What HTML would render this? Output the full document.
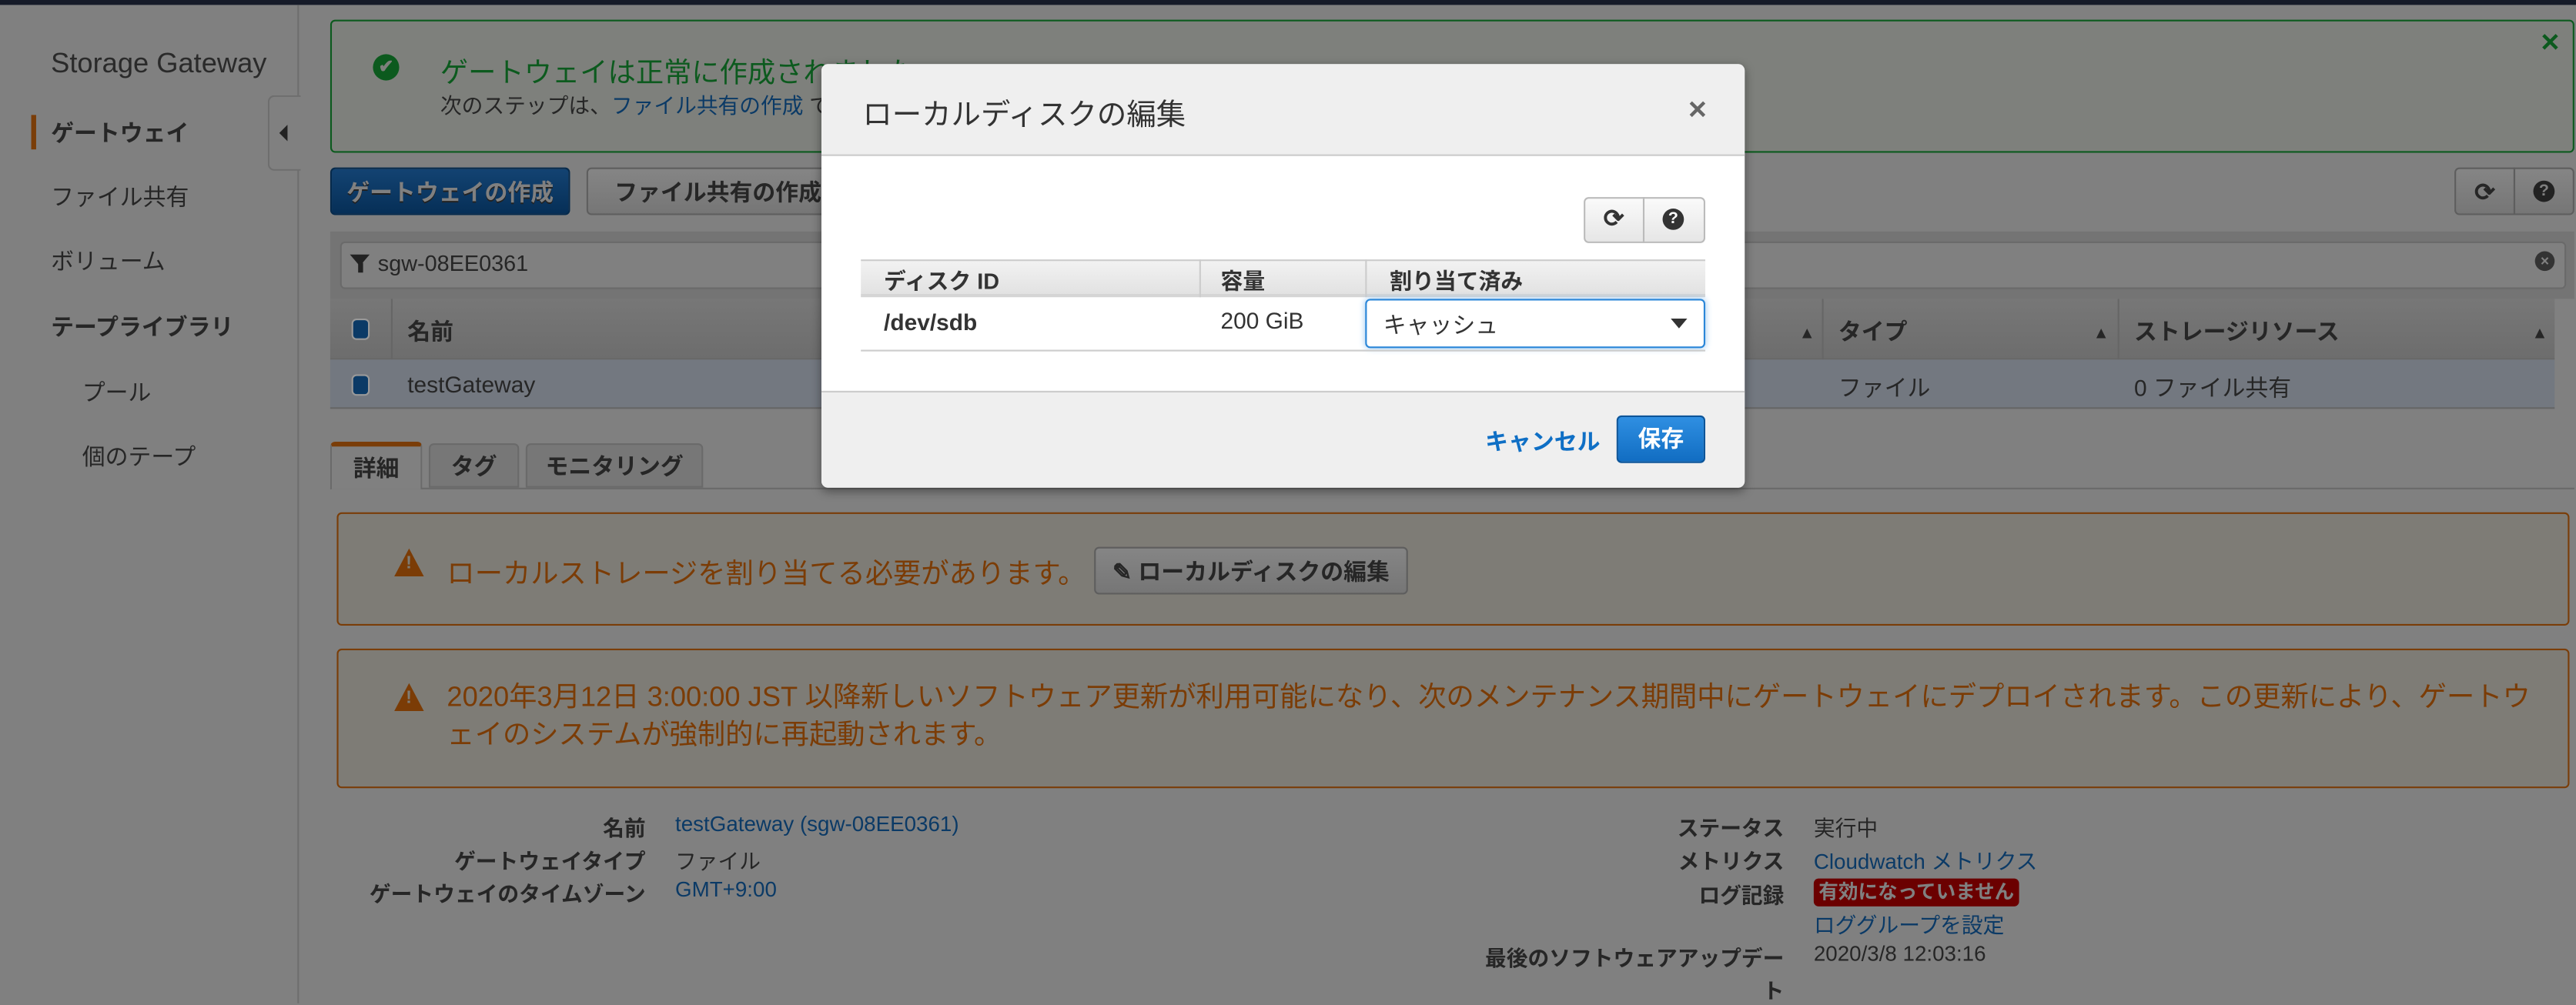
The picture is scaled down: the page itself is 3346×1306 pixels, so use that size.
<!DOCTYPE html>
<html><head><meta charset="utf-8">
<style>
*{box-sizing:border-box;margin:0;padding:0}
html,body{width:3346px;height:1304px;overflow:hidden;background:#808080}
#w{position:absolute;left:0;top:0;width:1568px;height:611px;transform:scale(2.13393);transform-origin:0 0;background:#808080;font-family:"Liberation Sans","Noto Sans CJK JP",sans-serif;color:#262626;font-size:13px}
.a{position:absolute;white-space:nowrap}
.b{font-weight:bold}
.lk{color:#0b3a66}
.btn{position:absolute;border:1px solid #5e5e5e;border-radius:3px;background:linear-gradient(#858585,#767676);font-weight:bold;font-size:14px;display:flex;align-items:center;justify-content:center}
.warn{position:absolute;left:205px;width:1359px;border:1px solid #7a3d08;border-radius:3px;background:#7e7c76;color:#7b3c06;font-size:17px}
.tri{position:absolute;width:0;height:0;border-left:9px solid transparent;border-right:9px solid transparent;border-bottom:17px solid #7b3c06}
.tri:after{content:"!";position:absolute;left:-2px;top:3px;font-size:11px;font-weight:bold;color:#7e7c76;line-height:12px}
.lbl{position:absolute;text-align:right;font-weight:bold;white-space:nowrap}
</style></head><body><div id="w">
<div class="a" style="left:0;top:0;width:1568px;height:3px;background:#161b29"></div>
<!-- sidebar -->
<div class="a" style="left:181px;top:3px;width:1px;height:608px;background:#6e6e6e"></div>
<div class="a" style="left:31px;top:29px;font-size:17px;color:#2a2a2a">Storage Gateway</div>
<div class="a" style="left:19px;top:70px;width:3px;height:21px;background:#7a3d08"></div>
<div class="a b" style="left:31px;top:71px;font-size:14px">ゲートウェイ</div>
<div class="a" style="left:31px;top:110px;font-size:14px">ファイル共有</div>
<div class="a" style="left:31px;top:149px;font-size:14px">ボリューム</div>
<div class="a b" style="left:31px;top:189px;font-size:14px">テープライブラリ</div>
<div class="a" style="left:50px;top:229px;font-size:14px">プール</div>
<div class="a" style="left:50px;top:268px;font-size:14px">個のテープ</div>
<div class="a" style="left:163px;top:58px;width:20px;height:46px;border:1px solid #6e6e6e;border-right:none;border-radius:4px 0 0 4px;background:#808080"></div>
<div class="a" style="left:170px;top:76px;width:0;height:0;border-top:5px solid transparent;border-bottom:5px solid transparent;border-right:5px solid #222"></div>
<!-- success alert -->
<div class="a" style="left:201px;top:12px;width:1366px;height:81px;border:1px solid #0c5a1e;border-radius:3px;background:#7e807c"></div>
<div class="a" style="left:227px;top:33px;width:16px;height:16px;border-radius:50%;background:#0c5a1e;color:#7e807c;font-size:11px;font-weight:bold;text-align:center;line-height:16px">✔</div>
<div class="a" style="left:268px;top:30px;font-size:17px;color:#0c5a1e">ゲートウェイは正常に作成されました</div>
<div class="a" style="left:268px;top:54px;font-size:13px">次のステップは、<span class="lk">ファイル共有の作成</span> で</div>
<div class="a b" style="left:1546px;top:17px;color:#0c5a1e;font-size:15px">✕</div>
<!-- buttons -->
<div class="btn" style="left:201px;top:102px;width:146px;height:29px;background:linear-gradient(#134372,#062f57);border-color:#062a4c;color:#808080;text-shadow:0 1px 0 #222">ゲートウェイの作成</div>
<div class="btn" style="left:357px;top:102px;width:160px;height:29px">ファイル共有の作成</div>
<div class="btn" style="left:1494px;top:102px;width:37px;height:29px;border-radius:3px 0 0 3px;font-size:15px">⟳</div>
<div class="btn" style="left:1530px;top:102px;width:37px;height:29px;border-radius:0 3px 3px 0"><span style="display:inline-block;width:13px;height:13px;border-radius:50%;background:#222;color:#808080;font-size:10px;text-align:center;line-height:13px">?</span></div>
<!-- filter -->
<div class="a" style="left:201px;top:141px;width:1366px;height:41px;background:#747474"></div>
<div class="a" style="left:207px;top:147px;width:1355px;height:29px;background:#808080;border:1px solid #6a6a6a;border-radius:3px"></div>
<div class="a" style="left:213px;top:155px;width:0;height:0;border-left:6px solid transparent;border-right:6px solid transparent;border-top:7px solid #222"></div>
<div class="a" style="left:218px;top:160px;width:3px;height:6px;background:#222"></div>
<div class="a" style="left:230px;top:153px;font-size:13.5px">sgw-08EE0361</div>
<div class="a" style="left:1543px;top:153px;width:12px;height:12px;border-radius:50%;background:#333;color:#808080;font-size:9px;text-align:center;line-height:12px;font-weight:bold">×</div>
<!-- table -->
<div class="a" style="left:201px;top:182px;width:1354px;height:37px;background:linear-gradient(#777,#6d6d6d);border-bottom:1px solid #666"></div>
<div class="a" style="left:238px;top:182px;width:1px;height:37px;background:#666"></div>
<div class="a" style="left:1109px;top:182px;width:1px;height:37px;background:#666"></div>
<div class="a" style="left:1289px;top:182px;width:1px;height:37px;background:#666"></div>
<div class="a" style="left:214px;top:194px;width:11px;height:13px;border:1px solid #999;border-radius:3px;background:#0b3a66"></div>
<div class="a b" style="left:248px;top:192px;font-size:14px">名前</div>
<div class="a b" style="left:1119px;top:192px;font-size:14px">タイプ</div>
<div class="a b" style="left:1299px;top:192px;font-size:14px">ストレージリソース</div>
<div class="a" style="left:1095px;top:198px;font-size:10px">▲</div>
<div class="a" style="left:1274px;top:198px;font-size:10px">▲</div>
<div class="a" style="left:1541px;top:198px;font-size:10px">▲</div>
<div class="a" style="left:201px;top:219px;width:1354px;height:30px;background:#737880;border-bottom:1px solid #666"></div>
<div class="a" style="left:214px;top:228px;width:11px;height:13px;border:1px solid #999;border-radius:3px;background:#0b3a66"></div>
<div class="a" style="left:248px;top:226px;font-size:14px">testGateway</div>
<div class="a" style="left:1119px;top:226px;font-size:14px">ファイル</div>
<div class="a" style="left:1299px;top:226px;font-size:14px">0 ファイル共有</div>
<!-- tabs -->
<div class="a" style="left:201px;top:297px;width:1366px;height:1px;background:#6a6a6a"></div>
<div class="a b" style="left:201px;top:269px;width:56px;height:29px;background:#808080;border:1px solid #6a6a6a;border-bottom:none;border-top:3px solid #7a3d08;border-radius:3px 3px 0 0;text-align:center;line-height:26px;font-size:14px">詳細</div>
<div class="a b" style="left:261px;top:270px;width:55px;height:27px;background:#777;border:1px solid #6a6a6a;border-radius:3px 3px 0 0;text-align:center;line-height:26px;font-size:14px">タグ</div>
<div class="a b" style="left:320px;top:270px;width:108px;height:27px;background:#777;border:1px solid #6a6a6a;border-radius:3px 3px 0 0;text-align:center;line-height:26px;font-size:14px">モニタリング</div>
<!-- warnings -->
<div class="warn" style="top:312px;height:69px"></div>
<div class="tri" style="left:240px;top:334px"></div>
<div class="a" style="left:272px;top:335px;font-size:17px;color:#7b3c06">ローカルストレージを割り当てる必要があります。</div>
<div class="btn" style="left:666px;top:333px;width:191px;height:29px;font-size:14px">✎ ローカルディスクの編集</div>
<div class="warn" style="top:395px;height:85px"></div>
<div class="tri" style="left:240px;top:416px"></div>
<div class="a" style="left:272px;top:413px;font-size:17px;color:#7b3c06;line-height:23px;white-space:normal;width:1270px">2020年3月12日 3:00:00 JST 以降新しいソフトウェア更新が利用可能になり、次のメンテナンス期間中にゲートウェイにデプロイされます。この更新により、ゲートウェイのシステムが強制的に再起動されます。</div>
<!-- details -->
<div class="lbl" style="right:1175px;top:494px">名前</div>
<div class="lbl" style="right:1175px;top:514px">ゲートウェイタイプ</div>
<div class="lbl" style="right:1175px;top:534px">ゲートウェイのタイムゾーン</div>
<div class="a lk" style="left:411px;top:494px">testGateway (sgw-08EE0361)</div>
<div class="a" style="left:411px;top:514px">ファイル</div>
<div class="a lk" style="left:411px;top:534px">GMT+9:00</div>
<div class="lbl" style="right:482px;top:494px">ステータス</div>
<div class="lbl" style="right:482px;top:514px">メトリクス</div>
<div class="lbl" style="right:482px;top:535px">ログ記録</div>
<div class="lbl" style="right:482px;top:573px">最後のソフトウェアアップデー</div>
<div class="lbl" style="right:482px;top:593px">ト</div>
<div class="a" style="left:1104px;top:494px">実行中</div>
<div class="a lk" style="left:1104px;top:514px">Cloudwatch メトリクス</div>
<div class="a b" style="left:1104px;top:535px;background:#6b0000;color:#808080;border-radius:3px;padding:0 3px;height:17px;line-height:17px;font-size:12px">有効になっていません</div>
<div class="a lk" style="left:1104px;top:553px">ロググループを設定</div>
<div class="a" style="left:1104px;top:573px">2020/3/8 12:03:16</div>
<!-- modal -->
<div class="a" style="left:500px;top:39px;width:562px;height:258px;background:#fff;border-radius:4px;box-shadow:0 2px 6px rgba(0,0,0,.4);overflow:hidden">
 <div class="a" style="left:0;top:0;width:562px;height:56px;background:#efefef;border-bottom:1px solid #ccc"></div>
 <div class="a" style="left:25px;top:17px;font-size:18px;color:#333">ローカルディスクの編集</div>
 <div class="a b" style="left:527px;top:19px;font-size:15px;color:#666">✕</div>
 <div class="a" style="left:464px;top:81px;width:74px;height:28px;border:1px solid #bbb;border-radius:3px;background:linear-gradient(#fafafa,#e6e6e6)"></div>
 <div class="a" style="left:500px;top:81px;width:1px;height:28px;background:#bbb"></div>
 <div class="a b" style="left:476px;top:85px;font-size:15px;color:#333">⟳</div>
 <div class="a" style="left:512px;top:88px;width:13px;height:13px;border-radius:50%;background:#333;color:#fff;font-size:10px;font-weight:bold;text-align:center;line-height:13px">?</div>
 <div class="a" style="left:24px;top:119px;width:514px;height:23px;background:linear-gradient(#f2f2f2,#e2e2e2);border-top:1px solid #ccc;border-bottom:2px solid #d5d5d5"></div>
 <div class="a" style="left:230px;top:119px;width:1px;height:23px;background:#ccc"></div>
 <div class="a" style="left:331px;top:119px;width:1px;height:23px;background:#ccc"></div>
 <div class="a b" style="left:38px;top:121px;font-size:13.5px;color:#333">ディスク ID</div>
 <div class="a b" style="left:243px;top:121px;font-size:13.5px;color:#333">容量</div>
 <div class="a b" style="left:346px;top:121px;font-size:13.5px;color:#333">割り当て済み</div>
 <div class="a b" style="left:38px;top:149px;font-size:14px;color:#333">/dev/sdb</div>
 <div class="a" style="left:243px;top:148px;font-size:14px;color:#333">200 GiB</div>
 <div class="a" style="left:331px;top:143px;width:207px;height:30px;border:1px solid #2a86d8;border-radius:3px;box-shadow:0 0 4px #9cc8f0;background:#fff"></div>
 <div class="a" style="left:342px;top:149px;font-size:14px;color:#333">キャッシュ</div>
 <div class="a" style="left:517px;top:155px;width:0;height:0;border-left:5px solid transparent;border-right:5px solid transparent;border-top:6px solid #333"></div>
 <div class="a" style="left:24px;top:174px;width:514px;height:1px;background:#ccc"></div>
 <div class="a" style="left:0;top:199px;width:562px;height:59px;background:#efefef;border-top:1px solid #ccc"></div>
 <div class="a b" style="left:404px;top:220px;font-size:14px;color:#0f6fc5">キャンセル</div>
 <div class="a b" style="left:484px;top:214px;width:54px;height:29px;border-radius:3px;background:linear-gradient(#2f8fe2,#116dc2);border:1px solid #0d5599;color:#fff;text-align:center;line-height:27px;font-size:14px">保存</div>
</div>
</div></body></html>
